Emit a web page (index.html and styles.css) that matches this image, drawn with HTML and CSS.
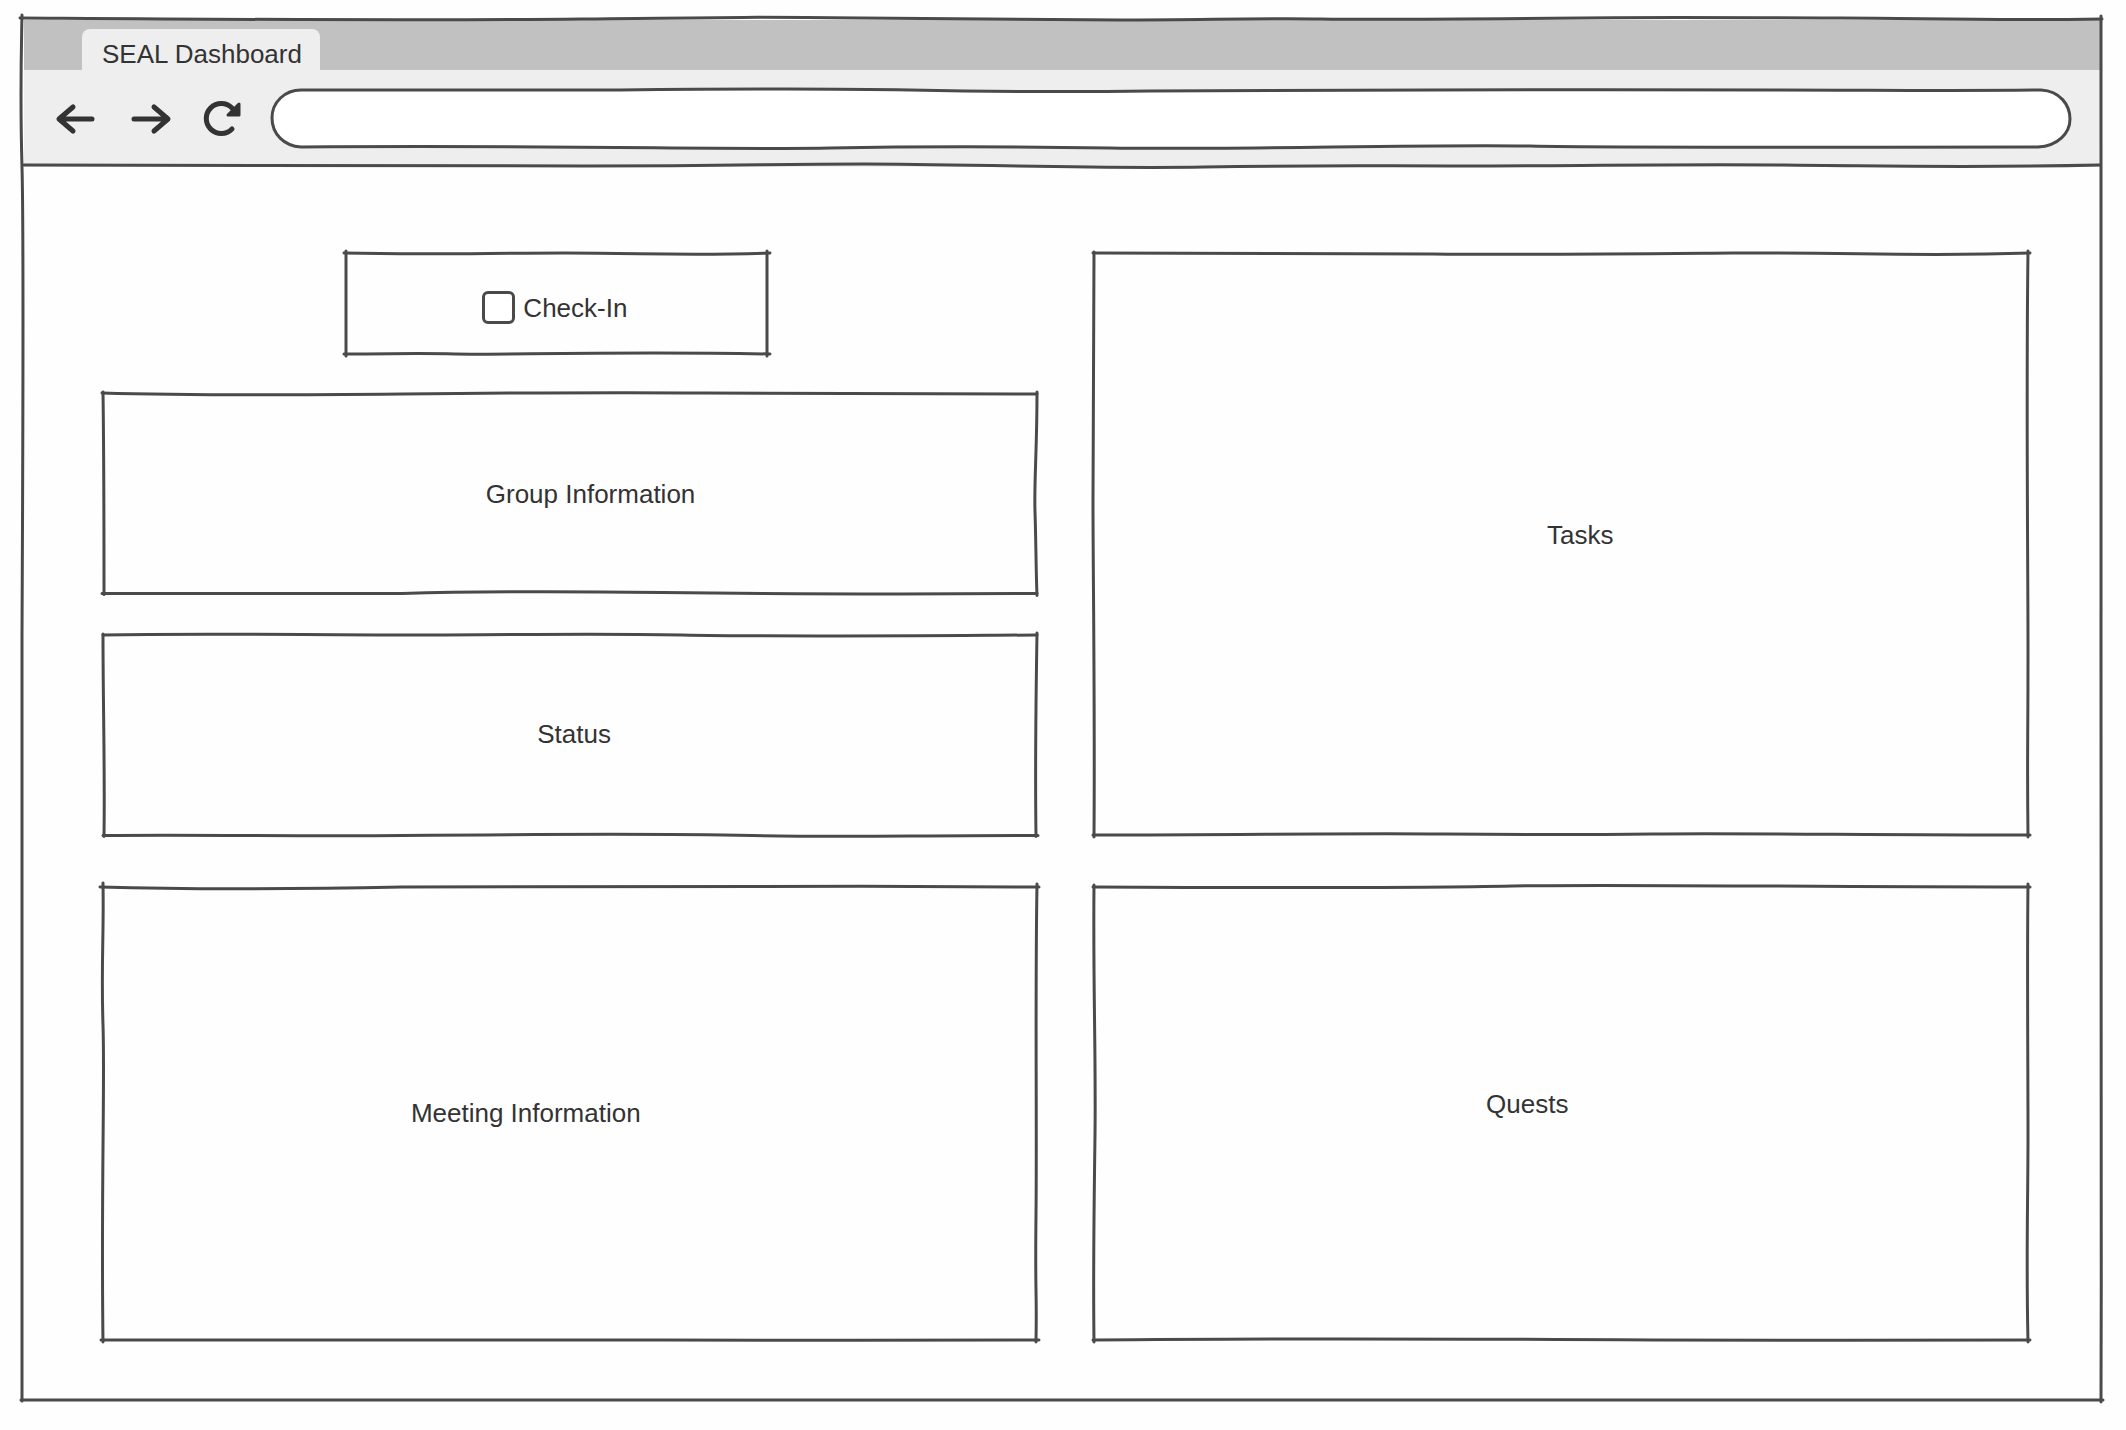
FILE: index.html
```
<!DOCTYPE html>
<html lang="en">
<head>
    <meta charset="utf-8">
    <title>SEAL Dashboard</title>
    <link rel="stylesheet" href="styles.css">
</head>
<body>
    <div class="window">
        <header class="browser">
            <div class="tabs">
                <h1 class="tab">SEAL Dashboard</h1>
            </div>
            <div class="toolbar">
                <div class="nav">
                    <button class="nav-btn" type="button" aria-label="Back">
                        <svg viewBox="0 0 40 40"><path d="M17 8 L3 20 L17 32 M4 20 H36"/></svg>
                    </button>
                    <button class="nav-btn" type="button" aria-label="Forward">
                        <svg viewBox="0 0 40 40"><path d="M25 8 L39 20 L25 32 M5 20 H38"/></svg>
                    </button>
                    <button class="nav-btn" type="button" aria-label="Reload">
                        <svg viewBox="0 0 40 40"><path d="M30 30 A15 15 0 1 1 30 9"/><path class="solid" d="M37 5 V16 H26 Z"/></svg>
                    </button>
                </div>
                <div class="address-box">
                    <svg class="frame" viewBox="0 0 1802 61" preserveAspectRatio="none" aria-hidden="true">
                        <path class="paper" d="M31 2 C150 3 260 3 350 2 S540 0 640 2 S800 4 880 3 S1060 3 1160 2 S1400 2 1500 2 S1680 3 1771 2 C1790 3 1800 17 1800 31 S1788 58 1768 59 C1560 59 1360 60 1260 58 S960 62 840 60 S660 58 560 60 S300 57 31 59 C14 58 2 46 2 30 S15 2 31 2 Z"/>
                    </svg>
                    <input class="address" type="text" aria-label="Address">
                </div>
            </div>
            <svg class="frame" viewBox="0 0 2076 147" preserveAspectRatio="none" aria-hidden="true">
                <path d="M0 145 C200 146 400 146 560 146 S740 144 840 144 S1060 149 1180 147 S1340 146 1440 146 S1640 144 1760 145 S1940 148 2076 145"/>
            </svg>
        </header>
        <main class="dashboard">
            <div class="stack">
                <section class="card check-in">
                    <svg class="frame" viewBox="0 0 423 103" preserveAspectRatio="none" aria-hidden="true">
                        <path d="M-1 1 C80 3 140 1 220 1 S340 4 424 1"/>
                        <path d="M421 -1 V104"/>
                        <path d="M-1 102 C50 102 70 101 110 102 S280 99 424 102"/>
                        <path d="M1 -1 V104"/>
                    </svg>
                    <input class="tick" type="checkbox" id="checkin">
                    <label for="checkin">Check-In</label>
                </section>
                <section class="card group">
                    <svg class="frame" viewBox="0 0 936 204" preserveAspectRatio="none" aria-hidden="true">
                        <path d="M0 1 C100 4 200 3 300 2 S500 0 600 1 S800 1 935 2"/>
                        <path d="M935 0 C935 60 932 90 933 120 S934 180 935 204"/>
                        <path d="M0 202 H300 C400 199 480 200 560 201 S760 203 935 202"/>
                        <path d="M1 0 C2 70 2 140 2 203"/>
                    </svg>
                    <h2 class="label">Group Information</h2>
                </section>
                <section class="card status">
                    <svg class="frame" viewBox="0 0 936 204" preserveAspectRatio="none" aria-hidden="true">
                        <path d="M1 2 C100 0 200 2 310 2 S480 0 580 2 S780 3 935 2"/>
                        <path d="M935 0 C934 60 933 130 934 204"/>
                        <path d="M1 203 C100 202 200 204 300 203 S560 201 650 203 S800 203 936 203"/>
                        <path d="M1 1 C1 70 3 140 2 204"/>
                    </svg>
                    <h2 class="label">Status</h2>
                </section>
            </div>
            <section class="card tasks">
                <svg class="frame" viewBox="0 0 936 584" preserveAspectRatio="none" aria-hidden="true">
                    <path d="M0 1 C150 1 260 1 340 2 S520 2 640 1 S820 5 937 1"/>
                    <path d="M935 -1 C933 150 935 300 935 400 S934 500 935 585"/>
                    <path d="M0 583 C150 583 250 581 350 582 S480 583 560 582 S780 583 937 583"/>
                    <path d="M1 0 C0 100 0 180 0 250 S2 450 1 585"/>
                </svg>
                <h2 class="label">Tasks</h2>
            </section>
            <section class="card meeting">
                <svg class="frame" viewBox="0 0 936 456" preserveAspectRatio="none" aria-hidden="true">
                    <path d="M-2 2 C100 5 200 4 300 2 S700 1 937 2"/>
                    <path d="M935 -1 C933 120 935 240 934 330 S935 400 934 457"/>
                    <path d="M-1 455 C200 456 400 454 560 455 S780 455 937 455"/>
                    <path d="M1 -2 C2 50 -1 80 1 140 S-1 300 1 457"/>
                </svg>
                <h2 class="label">Meeting Information</h2>
            </section>
            <section class="card quests">
                <svg class="frame" viewBox="0 0 936 456" preserveAspectRatio="none" aria-hidden="true">
                    <path d="M0 2 C200 3 330 3 420 1 S700 2 937 2"/>
                    <path d="M935 -1 C934 80 935 180 935 250 S933 370 935 457"/>
                    <path d="M0 455 C200 453 400 454 560 455 S780 455 937 455"/>
                    <path d="M1 0 C0 100 3 170 2 250 S0 380 1 457"/>
                </svg>
                <h2 class="label">Quests</h2>
            </section>
        </main>
        <svg class="frame" viewBox="0 0 2082 1383" preserveAspectRatio="none" aria-hidden="true">
            <path d="M-1 1 C150 2 400 4 560 2 S740 0 840 1 S1020 3 1100 3 S1240 1 1300 2 S1460 2 1560 1 S1740 1 1820 1 S1960 4 2081 2"/>
            <path d="M2080 -1 C2079 200 2081 400 2080 600 S2081 1100 2080 1384"/>
            <path d="M0 1382 C300 1383 560 1380 780 1382 S1500 1383 2082 1382"/>
            <path d="M1 -2 C0 50 -1 80 1 150 S2 400 1 620 S2 1100 1 1383"/>
        </svg>
    </div>
</body>
</html>
```
FILE: styles.css
```
* { box-sizing: border-box; }
body {
    margin: 0; padding: 17px 23px 29px 21px;
    min-height: 100vh;
    display: flex; flex-direction: column;
    background-color: #fefefe; color: #333;
    font-family: "Liberation Sans", Arial, sans-serif;
    font-size: 26px; line-height: 32px;
}
h1, h2 { margin: 0; font-size: inherit; font-weight: normal; }
.window {
    position: relative; flex: 1;
    display: flex; flex-direction: column;
    padding: 3px;
}

/* hand-drawn outlines, stretched over their box */
.frame {
    position: absolute; top: 0; left: 0;
    width: 100%; height: 100%;
    overflow: visible; pointer-events: none;
}
.frame path {
    fill: none; stroke: #4a4a4a; stroke-width: 3px;
    stroke-linecap: round; vector-effect: non-scaling-stroke;
}
.frame .paper { fill: #fff; }

.browser { position: relative; background-color: #eee; }
.tabs {
    display: flex; align-items: flex-end;
    height: 50px; padding-left: 58px;
    background-color: #c1c1c1;
}
.tab {
    padding: 9px 18px 0 20px; height: 41px;
    background-color: #eee;
    border-radius: 8px 8px 0 0;
}
.toolbar {
    display: flex; align-items: center; gap: 28px;
    height: 97px; padding: 0 28px 0 32px;
}
.nav { display: flex; gap: 33px; }
.nav-btn {
    width: 40px; height: 40px; padding: 0;
    border: 0; background: none; cursor: pointer;
}
.nav-btn svg { display: block; width: 40px; height: 40px; overflow: visible; }
.nav-btn path {
    fill: none; stroke: #333; stroke-width: 5px;
    stroke-linecap: round; stroke-linejoin: round;
}
.nav-btn .solid { fill: #333; stroke-width: 3px; }
.address-box { position: relative; flex: 1; height: 61px; }
.address {
    position: relative; display: block;
    width: 100%; height: 100%; padding: 0 28px;
    border: 0; border-radius: 31px;
    background: none; font: inherit; color: inherit;
}

.dashboard {
    flex: 1;
    display: grid; grid-template-columns: 1fr 1fr;
    grid-template-rows: 584fr 456fr;
    gap: 49px 55px;
    padding: 85px 71px 57px 78px;
}
.stack { display: flex; flex-direction: column; gap: 37px; }
.card {
    position: relative; flex: 1;
    display: flex; align-items: center;
}
.check-in {
    flex: none; gap: 8px;
    width: 424px; margin-left: 26%;
    padding: 39px 0 31px 137px;
}
.tick {
    appearance: none; width: 33px; height: 33px; margin: 0;
    border: 3px solid #4a4a4a; border-radius: 6px;
    background-color: #fff; cursor: pointer;
}
.tick:checked { background-color: #4a4a4a; }
.group { padding-left: 41%; }
.status { padding-left: 46.5%; }
.tasks { padding: 0 0 18px 48.5%; }
.meeting { padding-left: 33%; }
.quests { padding: 0 0 18px 42%; }
```
